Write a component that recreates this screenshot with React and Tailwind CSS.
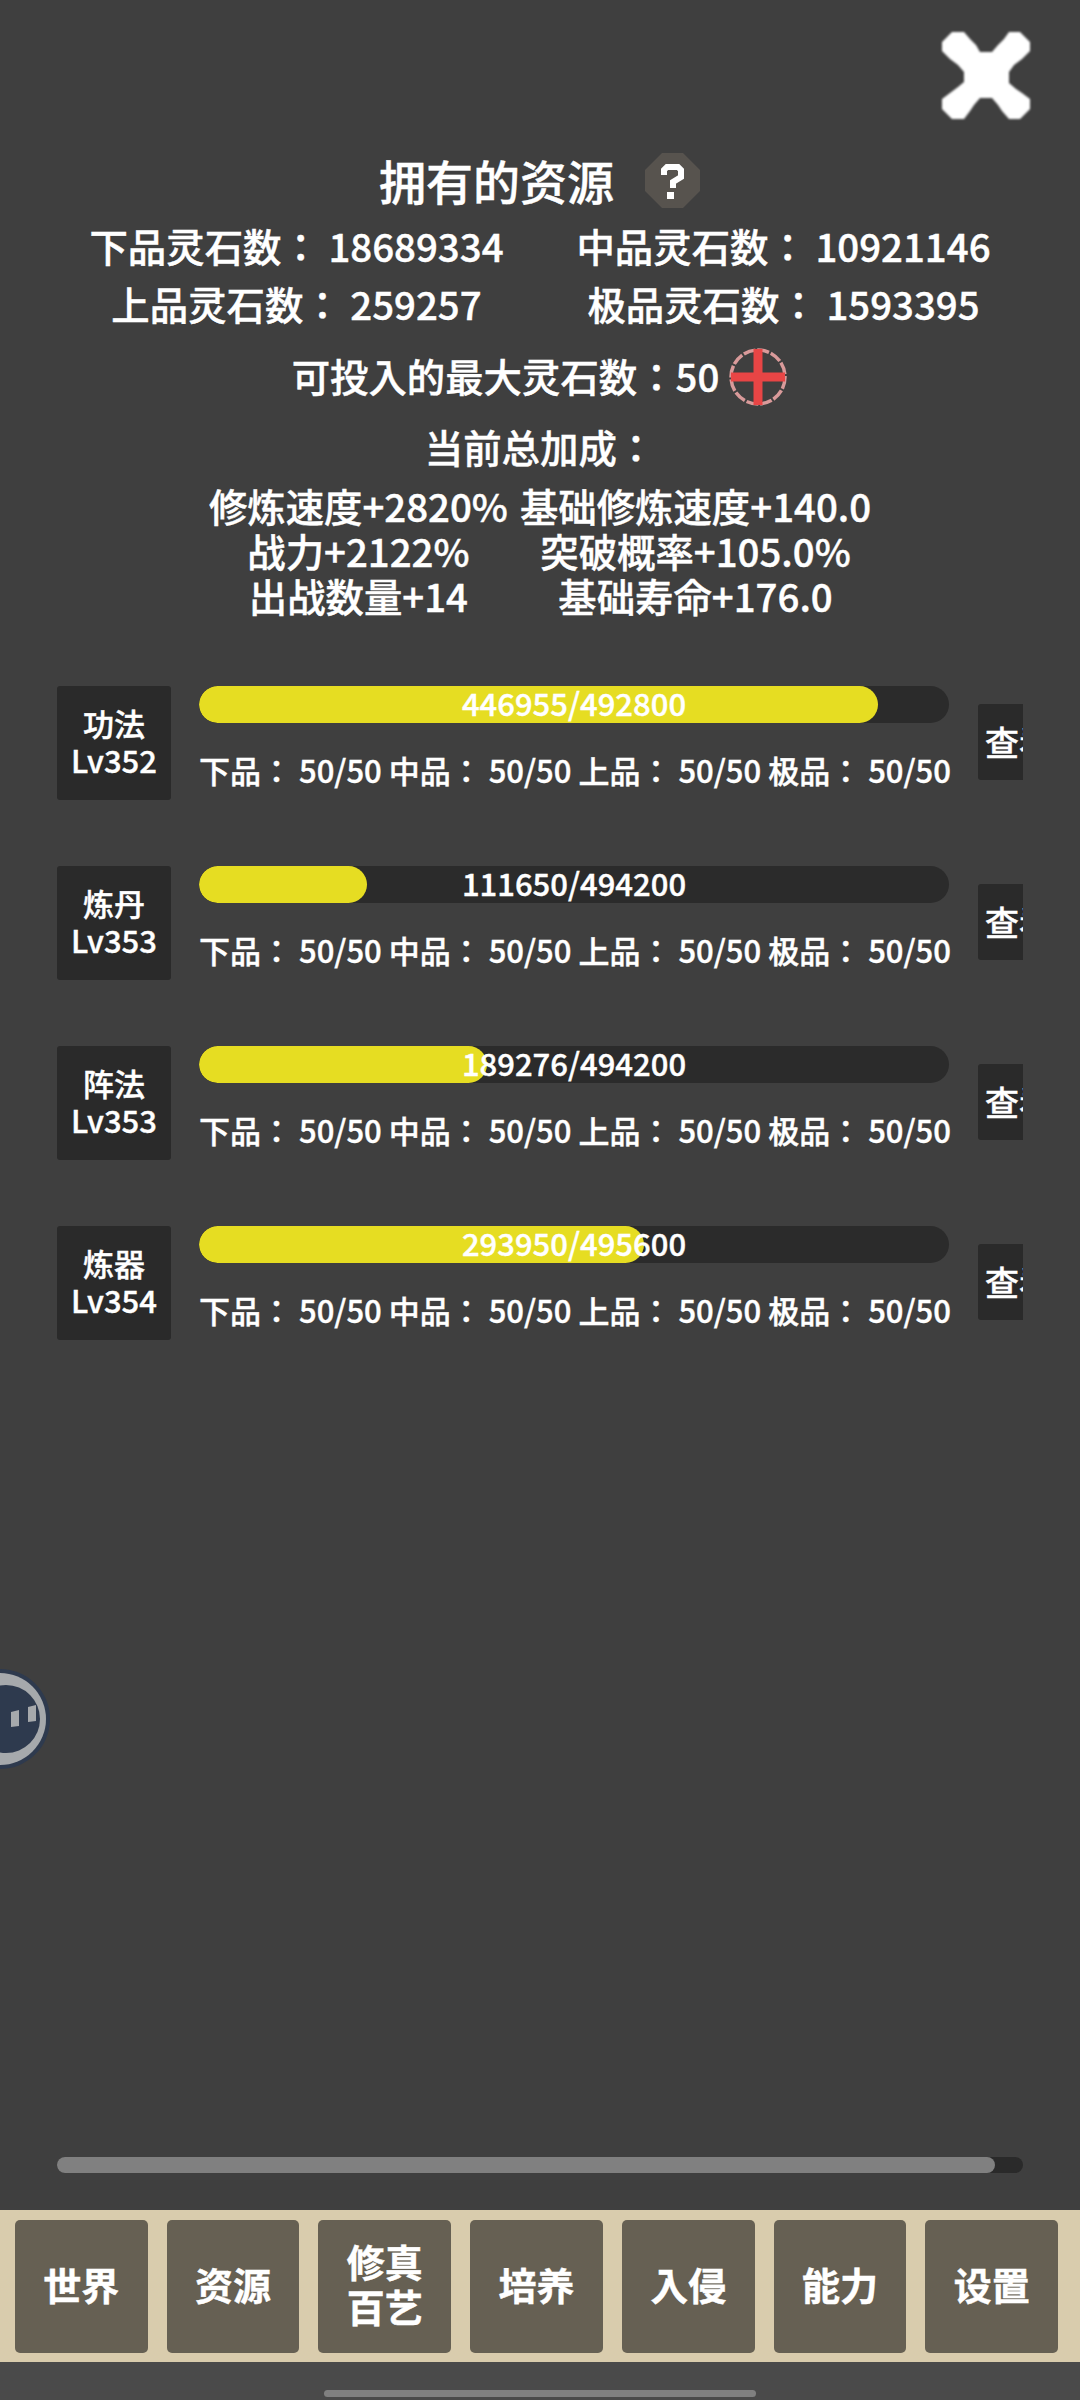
const skills = [
  { name: "功法", level: "Lv352", value: "446955/492800", fill: "w-[679px]" },
  { name: "炼丹", level: "Lv353", value: "111650/494200", fill: "w-[168px]" },
  { name: "阵法", level: "Lv353", value: "189276/494200", fill: "w-[288px]" },
  { name: "炼器", level: "Lv354", value: "293950/495600", fill: "w-[445px]" }
];

const navItems = ["世界", "资源", "修真\n百艺", "培养", "入侵", "能力", "设置"];

function CloseIcon() {
  return (
    <svg width="88" height="88" viewBox="0 0 88 88" fill="white" className="blur-[1px]">
      <polygon points="0,11 6,5 10,1 22,1 28,8 34,14 38,21 50,21 56,14 62,8 67,1 78,1 88,11 88,20 80,28 72,34 67,41 67,52 74,58 80,62 88,68 88,78 78,88 67,88 60,80 56,74 50,67 38,67 32,74 28,80 22,88 10,88 0,78 0,68 8,62 16,56 22,51 22,41 16,34 8,28 0,20" />
    </svg>
  );
}

function HelpIcon() {
  return (
    <svg width="57" height="57" viewBox="0 0 57 57" className="ml-[30px] blur-[0.7px]">
      <polygon points="18,1 39,1 56,18 56,39 39,56 18,56 1,39 1,18" fill="#57534e" />
      <path d="M20 23v-5l3-3h11l3 3v7l-8 5v6" fill="none" stroke="white" strokeWidth="6" />
      <rect x="23" y="40" width="7" height="7" fill="white" />
    </svg>
  );
}

function PlusIcon() {
  return (
    <svg width="60" height="60" viewBox="0 0 60 60" className="ml-[9px] mt-[3px] blur-[0.5px]">
      <circle cx="30" cy="30" r="27" fill="none" stroke="#d99a9a" strokeWidth="3.5" strokeDasharray="12 2" />
      <path d="M30 2v56M3 30h54" stroke="#e84545" strokeWidth="9" />
    </svg>
  );
}

function FloatingBall() {
  return (
    <svg width="52" height="100" viewBox="0 0 52 100" className="absolute left-0 top-[1669px]">
      <circle cx="0" cy="50" r="50" fill="#2e3a4e" />
      <circle cx="0" cy="50" r="46" fill="#a6a9ac" />
      <circle cx="6" cy="50" r="34" fill="#2e3a4e" />
      <polygon points="11,43 19,41 19,57 11,58" fill="#a6a9ac" />
      <polygon points="28,38 36,36 36,52 28,53" fill="#a6a9ac" />
    </svg>
  );
}

function SkillRow({ skill }) {
  return (
    <div className="flex w-[1100px] items-start">
      <div className="flex h-[114px] w-[114px] shrink-0 flex-col items-center justify-center rounded-[3px] bg-[#2a2a2a] pb-[4px] text-[31px] leading-[37px]">
        <span>{skill.name}</span>
        <span>{skill.level}</span>
      </div>
      <div className="ml-[28px] w-[750px] shrink-0">
        <div className="relative h-[37px] overflow-hidden rounded-full bg-[#2b2b2b]">
          <div className={`h-full rounded-full bg-[#e6dd22] ${skill.fill}`} />
          <span className="absolute inset-0 text-center text-[31px] leading-[33px]">{skill.value}</span>
        </div>
        <p className="mt-[25px] whitespace-nowrap text-[31px] leading-[44px]">
          下品： 50/50 中品： 50/50 上品： 50/50 极品： 50/50
        </p>
      </div>
      <div className="ml-[29px] mt-[18px] flex h-[76px] w-[100px] shrink-0 items-center rounded-[3px] bg-[#2a2a2a] pb-[2px] pl-[7px] text-[34px]">
        查看
      </div>
    </div>
  );
}

export default function App() {
  return (
    <div className="relative flex h-[2400px] w-[1080px] flex-col overflow-hidden bg-[#3f3f3f] font-['Noto_Sans_CJK_JP',sans-serif] font-medium text-white [-webkit-text-stroke:0.4px_white]">
      <div className="mr-[50px] mt-[31px] flex justify-end">
        <CloseIcon />
      </div>

      <div className="mt-[31px] flex h-[60px] items-center justify-center text-[47px] leading-[60px]">
        <span>拥有的资源</span>
        <HelpIcon />
      </div>

      <div className="mx-auto mt-[6px] grid w-[974px] grid-cols-2 text-center text-[38.4px] leading-[58px]">
        <span>下品灵石数： 18689334</span>
        <span>中品灵石数： 10921146</span>
        <span>上品灵石数： 259257</span>
        <span>极品灵石数： 1593395</span>
      </div>

      <div className="mt-[14px] flex h-[59px] items-center justify-center text-[38.4px]">
        <span>可投入的最大灵石数：50</span>
        <PlusIcon />
      </div>

      <p className="mt-[16px] text-center text-[38.4px] leading-[50px]">当前总加成：</p>

      <div className="mt-[12px] grid grid-cols-[auto_auto] justify-center justify-items-center gap-x-[12px] text-[38.4px] leading-[45px]">
        <span>修炼速度+2820%</span>
        <span>基础修炼速度+140.0</span>
        <span>战力+2122%</span>
        <span>突破概率+105.0%</span>
        <span>出战数量+14</span>
        <span>基础寿命+176.0</span>
      </div>

      <div className="ml-[57px] mt-[68px] flex w-[966px] flex-col gap-[66px] overflow-hidden">
        {skills.map((skill) => (
          <SkillRow key={skill.name} skill={skill} />
        ))}
      </div>

      <div className="flex-1" />

      <div className="mx-[57px] h-[16px] rounded-full bg-[#2a2a2a]">
        <div className="h-full w-[938px] rounded-full bg-[#808080]" />
      </div>

      <nav className="mt-[37px] flex h-[152px] gap-[19px] bg-[#d9ccad] pl-[15px] pr-[22px] pt-[10px]">
        {navItems.map((item) => (
          <button
            key={item}
            type="button"
            className="h-[133px] flex-1 whitespace-pre-line rounded-[5px] bg-[#666053] pb-[7px] text-[38px] font-bold leading-[45px] text-white"
          >
            {item}
          </button>
        ))}
      </nav>

      <div className="flex h-[38px] items-end justify-center bg-[#4a4a4a] pb-[3px]">
        <div className="h-[7px] w-[432px] rounded-full bg-[#808080]" />
      </div>

      <FloatingBall />
    </div>
  );
}
